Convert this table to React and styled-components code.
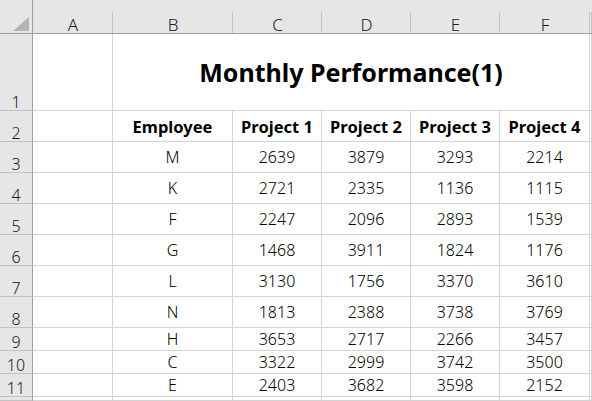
import React from "react";
import styled, { createGlobalStyle } from "styled-components";

const GlobalStyle = createGlobalStyle`
	html, body {
		margin: 0;
		padding: 0;
		background: #fff;
		overflow: hidden;
	}
	body {
		font-family: "Noto Sans", "Liberation Sans", sans-serif;
		color: #000;
	}
`;

const columns = ["A", "B", "C", "D", "E", "F"];

const rows = [
	["M", 2639, 3879, 3293, 2214],
	["K", 2721, 2335, 1136, 1115],
	["F", 2247, 2096, 2893, 1539],
	["G", 1468, 3911, 1824, 1176],
	["L", 3130, 1756, 3370, 3610],
	["N", 1813, 2388, 3738, 3769],
	["H", 3653, 2717, 2266, 3457],
	["C", 3322, 2999, 3742, 3500],
	["E", 2403, 3682, 3598, 2152],
];

const heads = ["Employee", "Project 1", "Project 2", "Project 3", "Project 4"];

const Sheet = styled.div`
	display: grid;
	grid-template-columns: 33px 80px 120px 89px 89px 89px 90px 1fr;
	grid-template-rows: 34px 77px repeat(7, 31px) repeat(3, 23px) 1fr;
	width: 592px;
	height: 401px;
	overflow: hidden;
`;

const Corner = styled.div`
	background: #e6e6e6;
	border-right: 1px solid #9f9f9f;
	border-bottom: 1px solid #9f9f9f;
	display: flex;
	align-items: flex-end;
	justify-content: flex-end;
	padding: 0 3px 2px 0;
`;

const ColHead = styled.div`
	background: linear-gradient(#c4c4c4, #c4c4c4) right bottom / 1px 21px no-repeat #e6e6e6;
	border-bottom: 1px solid #9f9f9f;
	display: flex;
	align-items: flex-end;
	justify-content: center;
	font-size: 17px;
	font-weight: 300;
	line-height: 17px;
	color: #1a1a1a;
`;

const RowHead = styled.div`
	background: #e6e6e6;
	border-right: 1px solid #9f9f9f;
	border-bottom: 1px solid #c2c2c2;
	display: flex;
	align-items: flex-end;
	justify-content: center;
	font-size: 16px;
	font-weight: 300;
	line-height: 16px;
	color: #1a1a1a;
`;

const Cell = styled.div`
	border-right: 1px solid #d4d4d4;
	border-bottom: 1px solid #d4d4d4;
	display: flex;
	align-items: center;
	justify-content: center;
	font-size: ${(p) => (p.$title ? "25px" : p.$head ? "16.5px" : "16px")};
	font-weight: ${(p) => (p.$title || p.$head ? 700 : 300)};
	grid-column: ${(p) => (p.$span ? `span ${p.$span}` : "auto")};
	white-space: nowrap;
	color: #000;
`;

const Triangle = () => (
	<svg width="16" height="14" viewBox="0 0 16 14">
		<polygon points="16,0 16,14 0,14" fill="#b4b4b4" />
	</svg>
);

function App() {
	return (
		<>
			<GlobalStyle />
			<Sheet>
				<Corner>
					<Triangle />
				</Corner>
				{columns.map((c) => (
					<ColHead key={c}>{c}</ColHead>
				))}
				<ColHead />

				<RowHead>1</RowHead>
				<Cell />
				<Cell $title $span={5}>
					Monthly Performance(1)
				</Cell>
				<Cell />

				<RowHead>2</RowHead>
				<Cell />
				{heads.map((h) => (
					<Cell key={h} $head>
						{h}
					</Cell>
				))}
				<Cell />

				{rows.map((r, i) => (
					<React.Fragment key={i}>
						<RowHead>{i + 3}</RowHead>
						<Cell />
						{r.map((v, j) => (
							<Cell key={j}>{v}</Cell>
						))}
						<Cell />
					</React.Fragment>
				))}

				<RowHead />
				<Cell />
				{heads.map((h) => (
					<Cell key={h} />
				))}
				<Cell />
			</Sheet>
		</>
	);
}

export default App;
